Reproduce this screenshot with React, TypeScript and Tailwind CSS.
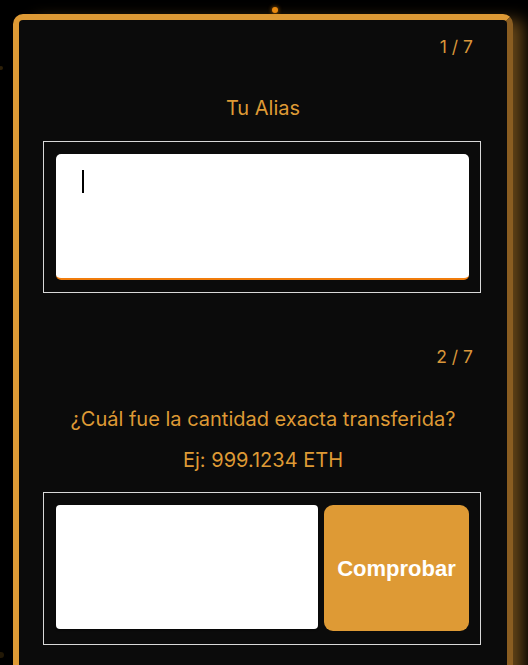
import React from "react";

// ─── Decorative particles ────────────────────────────────────────────────────

function Particles() {
  return (
    <>
      <span className="absolute left-[272px] top-[7px] h-[6px] w-[6px] rounded-full bg-[#e8890f] shadow-[0_0_4px_rgba(232,137,15,0.8)]" />
      <span className="absolute left-[-1px] top-[66px] h-[4px] w-[4px] rounded-full bg-[#2e2008]" />
      <span className="absolute left-[-2px] top-[652px] h-[6px] w-[6px] rounded-full bg-[#221806]" />
    </>
  );
}

// ─── Step header ─────────────────────────────────────────────────────────────

function StepCount({ label }: { label: string }) {
  return (
    <div className="flex justify-end pr-[34px] text-[17.5px] leading-6 text-[#d9963a]">
      {label}
    </div>
  );
}

// ─── App ─────────────────────────────────────────────────────────────────────

export default function App() {
  return (
    <div
      className="relative min-h-[665px] w-[528px] overflow-hidden bg-black pl-[13px] pt-[14px]"
      style={{ fontFamily: "Inter, 'Noto Sans', sans-serif" }}
    >
      <Particles />

      <div className="h-[680px] w-[500px] rounded-[10px] border-[6px] border-[#de9a35] border-r-[#8a5d21] bg-[#0b0b0b] shadow-[16px_0_16px_-6px_rgba(222,154,53,0.45)]">
        {/* Step 1 */}
        <div className="pt-[15px]">
          <StepCount label="1 / 7" />
          <p className="mt-[35px] text-center text-[20px] leading-7 text-[#de9a35]">Tu Alias</p>

          <div className="ml-[24px] mt-[19px] w-[438px] border border-[#d9d9d9] pb-[12px] pl-[12px] pr-[11px] pt-[12px]">
            <div className="h-[126px] w-[413px] rounded-[5px] border-b-2 border-[#f07c0c] bg-white pl-[26px] pt-[16px]">
              <div className="h-[23px] w-[2px] bg-black" />
            </div>
          </div>
        </div>

        {/* Step 2 */}
        <div className="pt-[52px]">
          <StepCount label="2 / 7" />
          <p className="mt-[36px] text-center text-[20px] leading-7 text-[#de9a35]">
            ¿Cuál fue la cantidad exacta transferida?
          </p>
          <p className="mt-[13px] text-center text-[20px] leading-7 text-[#de9a35]">Ej: 999.1234 ETH</p>

          <div className="ml-[24px] mt-[18px] flex w-[438px] items-start gap-[6px] border border-[#d9d9d9] pb-[13px] pl-[12px] pr-[11px] pt-[12px]">
            <div className="h-[124px] w-[262px] rounded-[4px] bg-white shadow-[0_1px_2px_rgba(0,0,0,0.6)]" />
            <button
              className="flex h-[126px] w-[145px] items-center justify-center rounded-[9px] bg-[#de9a35] text-[22px] font-bold text-white"
              style={{ fontFamily: "'Liberation Sans', Arial, sans-serif" }}
            >
              Comprobar
            </button>
          </div>
        </div>
      </div>
    </div>
  );
}
